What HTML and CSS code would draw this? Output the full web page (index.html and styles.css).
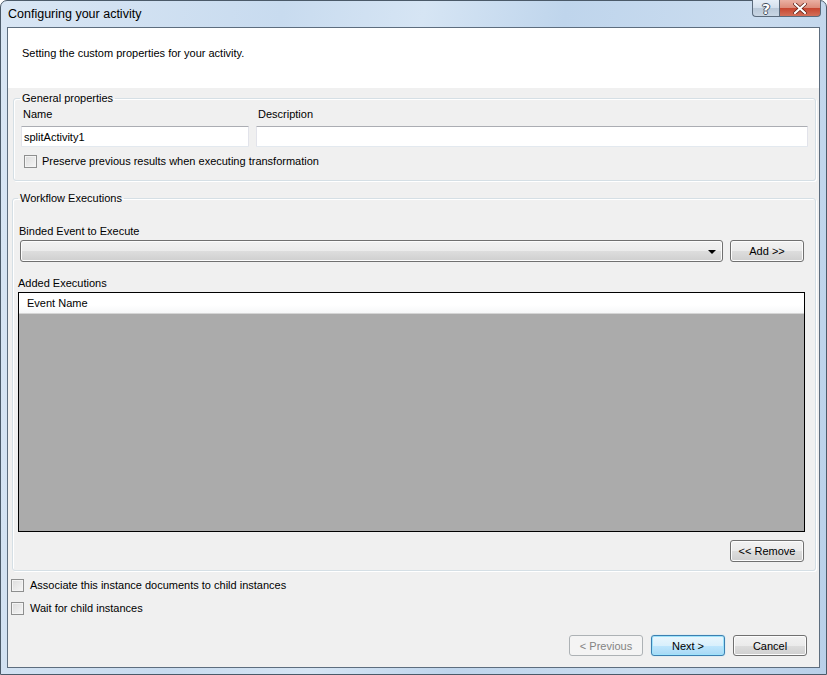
FILE: index.html
```html
<!DOCTYPE html>
<html>
<head>
    <link rel="stylesheet" href="styles.css">
</head>
<body>
    <div class="window">
        <div class="titlebar">
            <span class="title">Configuring your activity</span>
            <div class="caption-buttons">
                <div class="cap-btn help">?</div>
                <div class="cap-btn close">
                    <svg width="14" height="11" viewBox="0 0 14 11">
                        <path d="M2 1 L12 10 M12 1 L2 10" stroke="#5a1a10" stroke-width="3.6" stroke-linecap="square"/>
                        <path d="M2 1 L12 10 M12 1 L2 10" stroke="#fff" stroke-width="2.2" stroke-linecap="square"/>
                    </svg>
                </div>
            </div>
        </div>
        <div class="client">
            <div class="header">Setting the custom properties for your activity.</div>

            <fieldset class="group group-general">
                <legend>General properties</legend>
                <div class="fields">
                    <div class="field field-name">
                        <label>Name</label>
                        <input type="text" value="splitActivity1">
                    </div>
                    <div class="field field-desc">
                        <label>Description</label>
                        <input type="text">
                    </div>
                </div>
                <div class="check-row check-preserve">
                    <span class="checkbox"></span>
                    <span>Preserve previous results when executing transformation</span>
                </div>
            </fieldset>

            <fieldset class="group group-workflow">
                <legend>Workflow Executions</legend>
                <div class="label-binded">Binded Event to Execute</div>
                <div class="combo-row">
                    <div class="combo"><span class="arrow"></span></div>
                    <button class="btn btn-add">Add &gt;&gt;</button>
                </div>
                <div class="label-added">Added Executions</div>
                <div class="listview">
                    <div class="list-header">Event Name</div>
                    <div class="list-body"></div>
                </div>
                <div class="remove-row">
                    <button class="btn">&lt;&lt; Remove</button>
                </div>
            </fieldset>

            <div class="check-row check-bottom">
                <span class="checkbox"></span>
                <span>Associate this instance documents to child instances</span>
            </div>
            <div class="check-row check-bottom">
                <span class="checkbox"></span>
                <span>Wait for child instances</span>
            </div>

            <div class="footer">
                <button class="btn btn-disabled">&lt; Previous</button>
                <button class="btn btn-default">Next &gt;</button>
                <button class="btn">Cancel</button>
            </div>
        </div>
    </div>
</body>
</html>
```

FILE: styles.css
```css
body {
    margin: 0;
    padding: 0;
    font-family: "Liberation Sans", Arial, sans-serif;
    font-size: 11px;
    color: #000;
    background: #fff;
}

.window {
    width: 827px;
    height: 675px;
    box-sizing: border-box;
    border: 1px solid #4b5a69;
    border-radius: 7px 7px 0 0;
    background: linear-gradient(100deg, #d9e6f4 0%, #c8dbef 30%, #d6e5f4 45%, #bfd5ec 60%, #cadcef 80%, #b9d0e9 100%);
    padding: 0 6px 6px 6px;
    display: flex;
    flex-direction: column;
}

.titlebar {
    height: 26px;
    display: flex;
    align-items: flex-start;
    justify-content: space-between;
}

.title {
    font-size: 12.5px;
    margin-top: 6px;
    margin-left: 1px;
    color: #000;
}

.caption-buttons {
    display: flex;
    margin-top: -1px;
    margin-right: -1px;
}

.cap-btn {
    height: 17px;
    border: 1px solid #5b6b7c;
    border-top: none;
    display: flex;
    align-items: center;
    justify-content: center;
    box-sizing: border-box;
}

.help {
    width: 27px;
    border-radius: 0 0 0 4px;
    border-right: none;
    background: linear-gradient(#e6eef7 0%, #d3dfec 50%, #b9c8d8 51%, #c9d6e4 100%);
    font-family: "DejaVu Sans", sans-serif;
    font-size: 14px;
    font-weight: bold;
    color: #fff;
    text-shadow: -1px 0 0 #44505e, 1px 0 0 #44505e, 0 -1px 0 #44505e, 0 1px 0 #44505e;
    padding-top: 1px;
}

.close {
    width: 42px;
    border-radius: 0 0 4px 0;
    background: linear-gradient(#eab0a3 0%, #dc8a78 50%, #c7452f 51%, #d3705a 100%);
}

.client {
    flex: 1;
    border: 1px solid #5d6d7e;
    background: #f0f0f0;
    display: flex;
    flex-direction: column;
}

.header {
    height: 60px;
    background: #fff;
    padding-left: 14px;
    line-height: 50px;
}

.group {
    margin: 4px 3px 0 4px;
    padding: 0 7px 12px 7px;
    border: 1px solid #d5dfe5;
    border-radius: 3px;
    min-width: 0;
    box-shadow: inset 1px 1px 0 #fff, 1px 1px 0 #fff;
}

.group legend {
    padding: 0 2px;
    margin-left: -1px;
    line-height: 13px;
    color: #000;
}

.group-general {
    margin-left: 5px;
}

.fields {
    display: flex;
    gap: 7px;
    margin-top: 2px;
}

.field {
    display: flex;
    flex-direction: column;
}

.field label {
    line-height: 13px;
    padding-left: 2px;
    margin-top: 1px;
    margin-bottom: 5px;
}

.field-name {
    width: 228px;
}

.field-desc {
    flex: 1;
}

.field input {
    height: 21px;
    box-sizing: border-box;
    border: 1px solid #e2e3ea;
    border-top-color: #abadb3;
    border-bottom-color: #e3e9ef;
    border-radius: 1px;
    padding: 0 2px;
    font-family: "Liberation Sans", Arial, sans-serif;
    font-size: 11px;
    background: #fff;
    outline: none;
}

.check-row {
    display: flex;
    align-items: center;
    gap: 5px;
    line-height: 13px;
}

.check-preserve {
    margin-top: 8px;
    margin-left: 3px;
}

.checkbox {
    width: 13px;
    height: 13px;
    box-sizing: border-box;
    border: 1px solid #8e8f8f;
    background: linear-gradient(135deg, #dcdcdc, #f6f6f6);
    box-shadow: inset 0 0 0 1px #f4f4f4;
    flex-shrink: 0;
}

.group-workflow {
    margin-top: 11px;
    padding: 0 0 8px 6px;
    margin-right: 3px;
}

.label-binded {
    line-height: 13px;
    margin-top: 20px;
}

.combo-row {
    display: flex;
    gap: 7px;
    margin-top: 2px;
    padding-right: 11px;
    padding-left: 1px;
}

.combo {
    flex: 1;
    height: 22px;
    box-sizing: border-box;
    border: 1px solid #707070;
    border-radius: 3px;
    background: linear-gradient(#f2f2f2 0%, #ebebeb 50%, #dddddd 51%, #cfcfcf 100%);
    position: relative;
    box-shadow: inset 0 0 0 1px #fcfcfc;
}

.arrow {
    position: absolute;
    right: 6px;
    top: 9px;
    border-left: 4px solid transparent;
    border-right: 4px solid transparent;
    border-top: 4px solid #000;
}

.btn {
    width: 74px;
    height: 22px;
    box-sizing: border-box;
    border: 1px solid #707070;
    border-radius: 3px;
    background: linear-gradient(#f2f2f2 0%, #ebebeb 50%, #dddddd 51%, #cfcfcf 100%);
    box-shadow: inset 0 0 0 1px #fcfcfc;
    font-family: "Liberation Sans", Arial, sans-serif;
    font-size: 11px;
    color: #000;
    padding: 0;
}

.label-added {
    line-height: 13px;
    margin-top: 15px;
    margin-left: -1px;
}

.listview {
    margin-top: 2px;
    margin-left: -1px;
    margin-right: 10px;
    height: 240px;
    box-sizing: border-box;
    border: 1px solid #000;
    display: flex;
    flex-direction: column;
}

.list-header {
    height: 21px;
    box-sizing: border-box;
    background: linear-gradient(#ffffff 0%, #ffffff 60%, #f6f7f8 100%);
    border-bottom: 1px solid #d5d5d5;
    line-height: 21px;
    padding-left: 8px;
}

.list-body {
    flex: 1;
    background: #ababab;
}

.remove-row {
    display: flex;
    justify-content: flex-end;
    margin-top: 8px;
    padding-right: 11px;
}

.check-bottom {
    margin-left: 3px;
    gap: 6px;
}

.group-workflow + .check-bottom {
    margin-top: 8px;
}

.check-bottom + .check-bottom {
    margin-top: 10px;
}

.footer {
    margin-top: auto;
    display: flex;
    justify-content: flex-end;
    gap: 8px;
    padding-right: 12px;
    padding-bottom: 11px;
}

.footer .btn {
    width: 74px;
    height: 21px;
}

.btn-disabled {
    border-color: #adb2b5;
    background: #f4f4f4;
    box-shadow: none;
    color: #838383;
}

.btn-default {
    border-color: #3c7fb1;
    background: linear-gradient(#eaf6fd 0%, #d9f0fc 50%, #bee6fd 51%, #a7d9f5 100%);
    box-shadow: inset 0 0 0 1px #9ee3fb, 0 0 1px #6cc6ef;
}
```
